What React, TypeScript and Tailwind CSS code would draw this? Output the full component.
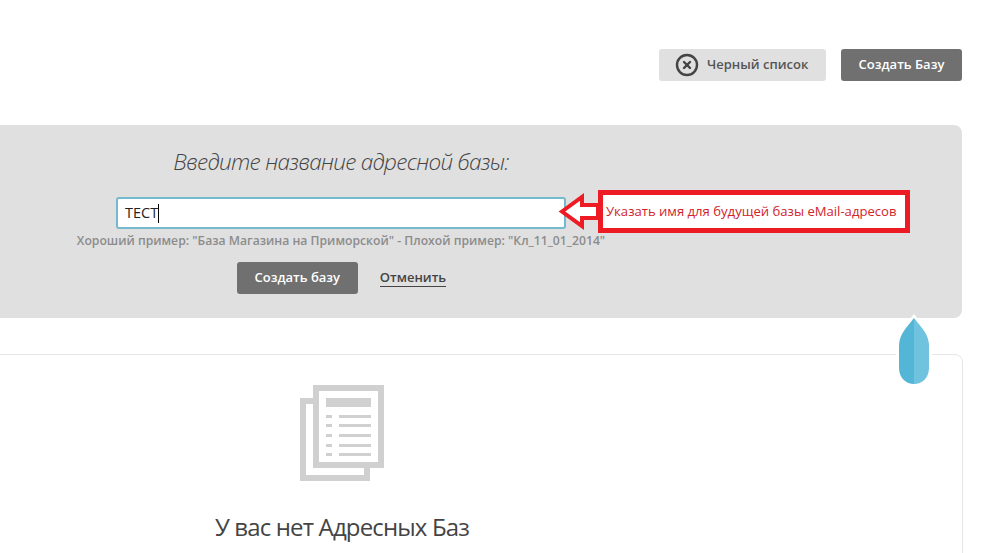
import { CircleX } from 'lucide-react'

function DocsIcon() {
  return (
    <svg width="84" height="96" viewBox="0 0 84 96" className="block">
      <path d="M3 16h64v77H3z" fill="#fff" stroke="#d0d0d0" strokeWidth="6" />
      <path d="M16 3h65v77H16z" fill="#fff" stroke="#d0d0d0" strokeWidth="6" />
      <rect x="26" y="13" width="45" height="9" fill="#d0d0d0" />
      {[30, 39, 49, 59, 68].map((y) => (
        <g key={y} fill="#d0d0d0">
          <rect x="26" y={y} width="6" height="3" />
          <rect x="39" y={y} width="32" height="3" />
        </g>
      ))}
    </svg>
  )
}

function Annotation() {
  return (
    <div className="absolute left-[557px] top-[190px] flex items-center">
      <svg width="41" height="43" viewBox="0 0 41 43" className="block">
        <path d="M5 21.5 L25 7 V15 H41 V28 H25 V36 Z" fill="#fff" stroke="#ed1c24" strokeWidth="4" />
      </svg>
      <div className="flex h-[43px] w-[312px] items-center border-[5px] border-[#ed1c24] bg-white pl-[3px] text-[13.1px] whitespace-nowrap text-[#d2232a]">
        Указать имя для будущей базы eMail-адресов
      </div>
    </div>
  )
}

function Drop() {
  return (
    <svg width="40" height="76" viewBox="0 0 40 76" className="absolute left-[894px] top-[314px] block">
      <path d="M20 0 L30 12 C35 18 38 24 38 32 V54 C38 66 30 74 20 74 C10 74 2 66 2 54 V32 C2 24 5 18 10 12 Z" fill="#fff" />
      <path d="M20 4 L12 14 C8 19 5 25 5 32 V54 C5 64 12 70 20 70 Z" fill="#54b6d6" />
      <path d="M20 4 L28 14 C32 19 35 25 35 32 V54 C35 64 28 70 20 70 Z" fill="#6fc3de" />
    </svg>
  )
}

export default function App() {
  return (
    <div className="relative h-[553px] overflow-hidden bg-white font-['Open_Sans',sans-serif]">
      <div className="flex h-[125px] items-start justify-end gap-[15px] pt-[49px] pr-[35px]">
        <button className="flex h-8 w-[167px] items-center gap-2 rounded-[3px] bg-[#e0e0e0] pl-4 text-[13px] font-semibold text-[#555]">
          <CircleX size={24} strokeWidth={2.4} className="text-[#444]" />
          Черный список
        </button>
        <button className="h-8 w-[121px] rounded-[3px] bg-[#707070] text-[13px] font-semibold text-white">
          Создать Базу
        </button>
      </div>

      <div className="ml-[-20px] h-[193px] w-[982px] rounded-lg bg-[#e0e0e0] pt-[22px] pl-[96px]">
        <div className="flex w-[530px] flex-col items-center">
          <h2 className="text-[22.5px] leading-[30px] font-light tracking-[-0.7px] text-[#444] italic">Введите название адресной базы:</h2>
          <div className="mt-5 flex h-[32px] w-[450px] items-center rounded-[3px] border-2 border-[#74b9cd] bg-white pl-[7px] text-[14.5px] text-[#222]">
            ТЕСТ<span className="h-[19px] w-px bg-black" />
          </div>
          <p className="mt-[3px] text-[12.2px] leading-[18px] font-semibold whitespace-nowrap text-[#8c8c8c]">
            Хороший пример: "База Магазина на Приморской" - Плохой пример: "Кл_11_01_2014"
          </p>
          <div className="mt-3 ml-px flex items-center gap-[22px]">
            <button className="h-8 w-[121px] rounded-[3px] bg-[#707070] text-[13px] font-semibold text-white">
              Создать базу
            </button>
            <a className="border-b border-[#444] text-[13px] leading-[17px] font-semibold text-[#444]">Отменить</a>
          </div>
        </div>
      </div>

      <div className="mt-9 ml-[-20px] h-[260px] w-[983px] rounded-lg border border-[#e6e6e6] pt-[30px] pl-[20px]">
        <div className="flex w-[682px] flex-col items-center">
          <DocsIcon />
          <h3 className="mt-[31px] text-[24px] leading-[30px] font-normal tracking-[-0.85px] text-[#444]">У вас нет Адресных Баз</h3>
        </div>
      </div>

      <Annotation />
      <Drop />
    </div>
  )
}
